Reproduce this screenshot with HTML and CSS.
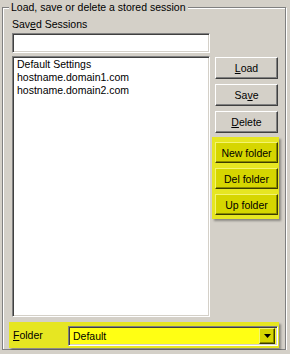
FILE: index.html
```html
<!DOCTYPE html>
<html lang="en">
<head>
  <meta charset="UTF-8">
  <meta name="viewport" content="width=device-width, initial-scale=1.0">
  <title>Stored Sessions</title>
  <link rel="stylesheet" href="styles.css">
</head>
<body>
  <fieldset class="group">
    <legend>Load, save or delete a stored session</legend>
    <div class="group-body">

      <div class="session-row">
        <!-- Session name + list -->
        <div class="session-col">
          <label class="field-label" for="sessionName">Sav<u>e</u>d Sessions</label>
          <input id="sessionName" class="text-input" type="text">
          <ul class="session-list">
            <li>Default Settings</li>
            <li>hostname.domain1.com</li>
            <li>hostname.domain2.com</li>
          </ul>
        </div>

        <!-- Actions -->
        <div class="button-col">
          <button class="btn"><u>L</u>oad</button>
          <button class="btn">Sa<u>v</u>e</button>
          <button class="btn"><u>D</u>elete</button>
          <div class="highlight folder-buttons">
            <button class="btn btn-yellow">New folder</button>
            <button class="btn btn-yellow">Del folder</button>
            <button class="btn btn-yellow">Up folder</button>
          </div>
        </div>
      </div>

      <!-- Folder picker -->
      <div class="highlight folder-bar">
        <label class="folder-label"><u>F</u>older</label>
        <div class="combo">
          <span class="combo-value">Default</span>
          <span class="combo-arrow">
            <svg width="7" height="4" viewBox="0 0 7 4"><path d="M0 0h7L3.5 4z" fill="#000"/></svg>
          </span>
        </div>
      </div>

    </div>
  </fieldset>
</body>
</html>
```

FILE: styles.css
```css
/* Classic dialog look */
body {
  margin: 0;
  background: #d4d0c8;
  font-family: "Liberation Sans", Arial, sans-serif;
  font-size: 10.5px;
  color: #000;
}

u {
  text-decoration: underline;
}

.group {
  margin: 1px 0 0 2px;
  padding: 0;
  width: 284px;
  box-sizing: border-box;
  border: 1px solid #808080;
  box-shadow: inset 1px 1px #fff, 1px 1px #fff;
}

.group legend {
  margin-left: 6px;
  padding: 0 2px;
  line-height: 13px;
  background: #d4d0c8;
}

.group-body {
  padding: 4px 0 1px 9px;
}

.session-row {
  display: flex;
}

.session-col {
  width: 198px;
}

.field-label {
  display: block;
  line-height: 13px;
  margin-bottom: 2px;
}

.text-input,
.session-list,
.combo {
  box-sizing: border-box;
  border: 1px solid;
  border-color: #808080 #fff #fff #808080;
  box-shadow: inset 1px 1px #404040, inset -1px -1px #d4d0c8;
}

.text-input {
  display: block;
  width: 198px;
  height: 20px;
  margin: 0 0 3px;
  padding: 0 3px;
  background: #fff;
  font: inherit;
  outline: none;
}

.session-list {
  list-style: none;
  margin: 0;
  padding: 1px 0 0 4px;
  height: 261px;
  background: #fff;
  line-height: 13px;
}

.button-col {
  display: flex;
  flex-direction: column;
  gap: 5px;
  margin-left: 5px;
  padding-top: 39px;
}

.btn {
  display: block;
  width: 63px;
  height: 22px;
  padding: 0;
  box-sizing: border-box;
  background: #d4d0c8;
  border: 1px solid;
  border-color: #fff #404040 #404040 #fff;
  box-shadow: inset -1px -1px #808080;
  font: inherit;
  color: #000;
}

/* Yellow call-outs */
.highlight {
  background: #e6e622;
  box-shadow: 2px 2px 2px rgba(0, 0, 0, 0.35);
}

.folder-buttons {
  display: flex;
  flex-direction: column;
  gap: 5px;
  width: 67px;
  box-sizing: border-box;
  margin: -1px 0 0 -3px;
  padding: 5px 2px 4px 3px;
}

.btn-yellow {
  height: 21px;
  background: #d6d600;
  border-color: #f4f470 #3c3c00 #3c3c00 #f4f470;
  box-shadow: inset -1px -1px #8a8a00;
}

.folder-bar {
  display: flex;
  align-items: center;
  width: 270px;
  height: 26px;
  box-sizing: border-box;
  margin: 5px 0 0 -3px;
  padding: 0 1px 0 4px;
}

.folder-label {
  line-height: 13px;
}

.combo {
  display: flex;
  align-items: center;
  width: 210px;
  height: 20px;
  margin: 2px 0 0 auto;
  padding: 2px;
  background: #ffff14;
}

.combo-value {
  flex: 1;
  padding-left: 2px;
}

.combo-arrow {
  display: flex;
  align-items: center;
  justify-content: center;
  width: 16px;
  height: 16px;
  box-sizing: border-box;
  background: #d6d600;
  border: 1px solid;
  border-color: #f4f470 #3c3c00 #3c3c00 #f4f470;
  box-shadow: inset -1px -1px #8a8a00;
}
```
